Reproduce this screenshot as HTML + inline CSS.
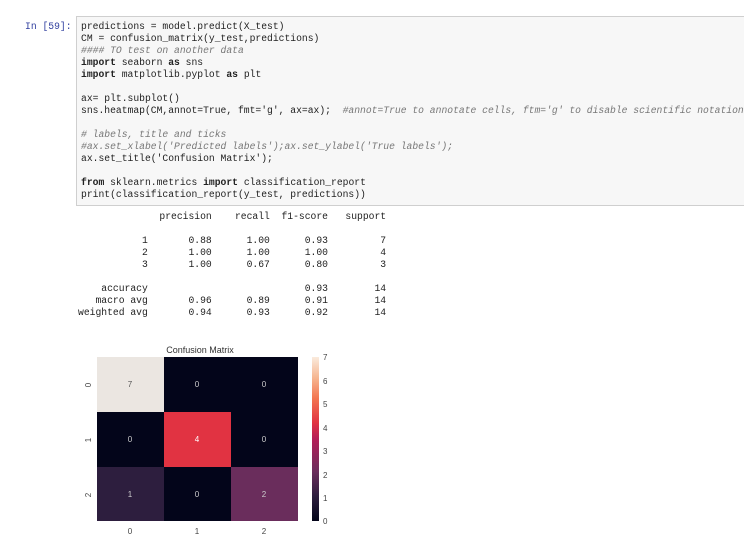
<!DOCTYPE html>
<html><head><meta charset="utf-8"><style>
body{margin:0;width:744px;height:548px;background:#fff;position:relative;overflow:hidden;font-family:"Liberation Mono",monospace;}
.prompt{position:absolute;left:25px;top:21px;font-size:9.7px;color:#303F9F;line-height:12px;}
.box{position:absolute;left:76px;top:16px;width:680px;height:190px;background:#f7f7f7;border:1px solid #cfcfcf;box-sizing:border-box;}
pre{margin:0;font-family:"Liberation Mono",monospace;font-size:9.7px;line-height:12px;color:#222;}
.code{position:absolute;left:81px;top:21px;}
.c{color:#777;font-style:italic}
.k{color:#222;font-weight:bold}
.out{position:absolute;left:78px;top:211px;color:#222;}
</style></head><body>
<div class="prompt">In [59]:</div>
<div class="box"></div>
<pre class="code">predictions = model.predict(X_test)
CM = confusion_matrix(y_test,predictions)
<span class="c">#### TO test on another data</span>
<span class="k">import</span> seaborn <span class="k">as</span> sns
<span class="k">import</span> matplotlib.pyplot <span class="k">as</span> plt

ax= plt.subplot()
sns.heatmap(CM,annot=True, fmt='g', ax=ax);  <span class="c">#annot=True to annotate cells, ftm='g' to disable scientific notation</span>

<span class="c"># labels, title and ticks</span>
<span class="c">#ax.set_xlabel('Predicted labels');ax.set_ylabel('True labels');</span>
ax.set_title('Confusion Matrix');

<span class="k">from</span> sklearn.metrics <span class="k">import</span> classification_report
print(classification_report(y_test, predictions))</pre>
<pre class="out">              precision    recall  f1-score   support

           1       0.88      1.00      0.93         7
           2       1.00      1.00      1.00         4
           3       1.00      0.67      0.80         3

    accuracy                           0.93        14
   macro avg       0.96      0.89      0.91        14
weighted avg       0.94      0.93      0.92        14</pre>
<svg style="position:absolute;left:0;top:0" width="744" height="548" font-family="Liberation Sans, sans-serif">
<defs><linearGradient id="g" x1="0" y1="1" x2="0" y2="0">
<stop offset="0" stop-color="#03051a"/><stop offset="0.15" stop-color="#2d1e3e"/><stop offset="0.3" stop-color="#6a2d5c"/><stop offset="0.5" stop-color="#b41e58"/><stop offset="0.6" stop-color="#e13342"/><stop offset="0.75" stop-color="#f37651"/><stop offset="0.87" stop-color="#f6b48e"/><stop offset="1" stop-color="#faebdd"/></linearGradient></defs>
<text x="200" y="353" font-size="9" fill="#333" text-anchor="middle">Confusion Matrix</text>
<rect x="97" y="357" width="67" height="55" fill="#ebe6e1"/>
<rect x="164" y="357" width="67" height="55" fill="#03051a"/>
<rect x="231" y="357" width="67" height="55" fill="#03051a"/>
<rect x="97" y="412" width="67" height="55" fill="#03051a"/>
<rect x="164" y="412" width="67" height="55" fill="#e13342"/>
<rect x="231" y="412" width="67" height="55" fill="#03051a"/>
<rect x="97" y="467" width="67" height="54" fill="#2d1e3e"/>
<rect x="164" y="467" width="67" height="54" fill="#03051a"/>
<rect x="231" y="467" width="67" height="54" fill="#6a2d5c"/>
<g font-size="8" text-anchor="middle">
<text x="130" y="387" fill="#555">7</text><text x="197" y="387" fill="#ccc">0</text><text x="264" y="387" fill="#ccc">0</text>
<text x="130" y="442" fill="#ccc">0</text><text x="197" y="442" fill="#fff">4</text><text x="264" y="442" fill="#ccc">0</text>
<text x="130" y="497" fill="#ccc">1</text><text x="197" y="497" fill="#ccc">0</text><text x="264" y="497" fill="#ccc">2</text>
</g>
<rect x="312" y="357" width="7" height="164" fill="url(#g)"/>
<g font-size="8" fill="#444">
<text x="323" y="360">7</text><text x="323" y="384">6</text><text x="323" y="407">5</text><text x="323" y="431">4</text><text x="323" y="454">3</text><text x="323" y="478">2</text><text x="323" y="501">1</text><text x="323" y="524">0</text>
<text x="130" y="534" text-anchor="middle">0</text><text x="197" y="534" text-anchor="middle">1</text><text x="264" y="534" text-anchor="middle">2</text>
<text transform="translate(91,385) rotate(-90)" text-anchor="middle">0</text>
<text transform="translate(91,440) rotate(-90)" text-anchor="middle">1</text>
<text transform="translate(91,495) rotate(-90)" text-anchor="middle">2</text>
</g>
</svg>
</body></html>
